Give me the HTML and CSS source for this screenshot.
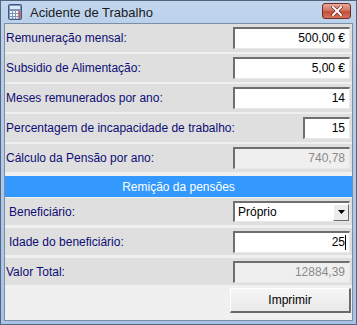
FILE: index.html
```html
<!DOCTYPE html>
<html lang="pt">
<head>
<meta charset="UTF-8" />
<title>Acidente de Trabalho</title>
<link rel="stylesheet" href="styles.css">
</head>
<body>
<div class="window">
  <div class="titlebar">
    <svg class="app-icon" width="14" height="16" viewBox="0 0 14 16">
      <rect x="0.5" y="0.5" width="13" height="15" rx="1" fill="#7d93b6" stroke="#3f5a86"/>
      <rect x="2" y="2" width="10" height="3" fill="#dfe9f5"/>
      <g fill="#f2f5fa">
        <rect x="2" y="7" width="2" height="2"/><rect x="5" y="7" width="2" height="2"/><rect x="8" y="7" width="2" height="2"/>
        <rect x="2" y="10" width="2" height="2"/><rect x="5" y="10" width="2" height="2"/><rect x="8" y="10" width="2" height="2"/>
        <rect x="2" y="13" width="2" height="1.5"/><rect x="5" y="13" width="2" height="1.5"/><rect x="8" y="13" width="2" height="1.5"/>
      </g>
      <rect x="11" y="7" width="1.5" height="7.5" fill="#e0564a"/>
    </svg>
    <span class="title">Acidente de Trabalho</span>
    <div class="close-btn">
      <svg width="12" height="10" viewBox="0 0 12 10">
        <path d="M2 1 L10 9 M10 1 L2 9" stroke="#7a2a22" stroke-width="3.4" stroke-linecap="square"/>
        <path d="M2 1 L10 9 M10 1 L2 9" stroke="#fff" stroke-width="2" stroke-linecap="square"/>
      </svg>
    </div>
  </div>

  <div class="content">
    <div class="row">
      <span class="label">Remuneração mensal:</span>
      <div class="field">500,00 €</div>
    </div>
    <div class="row">
      <span class="label">Subsidio de Alimentação:</span>
      <div class="field">5,00 €</div>
    </div>
    <div class="row">
      <span class="label">Meses remunerados por ano:</span>
      <div class="field">14</div>
    </div>
    <div class="row">
      <span class="label">Percentagem de incapacidade de trabalho:</span>
      <div class="field small">15</div>
    </div>
    <div class="row">
      <span class="label">Cálculo da Pensão por ano:</span>
      <div class="field disabled">740,78</div>
    </div>

    <div class="section">Remição da pensões</div>

    <div class="row low">
      <span class="label indent">Beneficiário:</span>
      <div class="select">
        <span class="select-value">Próprio</span>
        <span class="select-arrow">
          <svg width="7" height="4" viewBox="0 0 7 4"><path d="M0 0 H7 L3.5 4 Z" fill="#000"/></svg>
        </span>
      </div>
    </div>
    <div class="row low">
      <span class="label indent">Idade do beneficiário:</span>
      <div class="field">25<span class="caret"></span></div>
    </div>
    <div class="row low">
      <span class="label">Valor Total:</span>
      <div class="field disabled">12884,39</div>
    </div>

    <div class="actions">
      <button class="print-btn">Imprimir</button>
    </div>
  </div>
</div>
</body>
</html>
```

FILE: styles.css
```css
* { box-sizing: border-box; }
body {
  margin: 0;
  width: 357px;
  height: 325px;
  overflow: hidden;
  font-family: "Liberation Sans", Arial, sans-serif;
}
.window {
  width: 357px;
  height: 325px;
  background: linear-gradient(#c2d6ee, #b9cfea 30px, #a9c3e4);
  border: 1px solid #53667f;
  padding: 0 3px 3px 3px;
  display: flex;
  flex-direction: column;
}
.titlebar {
  height: 22px;
  display: flex;
  align-items: center;
  padding-left: 4px;
  flex-shrink: 0;
}
.app-icon { margin-right: 8px; }
.title {
  font-size: 13px;
  color: #1b1b1b;
  flex: 1;
}
.close-btn {
  width: 29px;
  height: 16px;
  margin-right: 2px;
  margin-top: -2px;
  border: 1px solid #6b2d24;
  border-radius: 3px;
  background: linear-gradient(#e7a99a, #d27563 45%, #c24d37 55%, #d5735a);
  display: flex;
  align-items: center;
  justify-content: center;
}
.content {
  flex: 1;
  background: #f0f0f0;
  border: 1px solid #7c8ea6;
  display: flex;
  flex-direction: column;
  padding-top: 0;
}
.row {
  height: 28px;
  margin-bottom: 2px;
  background: #dfdfdf;
  display: flex;
  align-items: center;
  justify-content: space-between;
  padding: 0 2px 0 1px;
}
.row.low { height: 27px; margin-bottom: 3px; }
.label {
  font-size: 12px;
  color: #0d0d75;
}
.label.indent { padding-left: 3px; }
.field {
  width: 117px;
  height: 22px;
  background: #fff;
  border-top: 2px solid #6f6f6f;
  border-left: 2px solid #6f6f6f;
  border-right: 1px solid #e8e8e8;
  border-bottom: 1px solid #e8e8e8;
  font-size: 12px;
  color: #000;
  text-align: right;
  padding: 2px 4px 0 0;
  position: relative;
}
.field.small { width: 47px; }
.field.disabled {
  background: #efefef;
  color: #8a8a8a;
}
.caret {
  position: absolute;
  right: 3px;
  top: 2px;
  width: 1px;
  height: 15px;
  background: #000;
}
.section {
  height: 21px;
  margin: 2px 0 1px 0;
  background: #3399ff;
  color: #fff;
  font-size: 12px;
  display: flex;
  align-items: center;
  justify-content: center;
}
.select {
  width: 117px;
  height: 21px;
  background: #fff;
  border-top: 2px solid #6f6f6f;
  border-left: 2px solid #6f6f6f;
  border-right: 1px solid #e8e8e8;
  border-bottom: 1px solid #e8e8e8;
  display: flex;
  align-items: center;
  justify-content: space-between;
  font-size: 12px;
}
.select-value { padding-left: 3px; }
.select-arrow {
  width: 16px;
  height: 17px;
  background: #ececec;
  border-top: 1px solid #fff;
  border-left: 1px solid #fff;
  border-right: 1px solid #6a6a6a;
  border-bottom: 1px solid #6a6a6a;
  display: flex;
  align-items: center;
  justify-content: center;
}
.actions {
  display: flex;
  justify-content: flex-end;
  padding: 0 1px 0 0;
}
.print-btn {
  width: 121px;
  height: 25px;
  font-family: "Liberation Sans", Arial, sans-serif;
  font-size: 12px;
  color: #000;
  background: linear-gradient(#f6f6f6, #e9e9e9);
  border-top: 1px solid #fff;
  border-left: 1px solid #fff;
  border-right: 2px solid #6a6a6a;
  border-bottom: 2px solid #6a6a6a;
  padding: 0;
}
```
